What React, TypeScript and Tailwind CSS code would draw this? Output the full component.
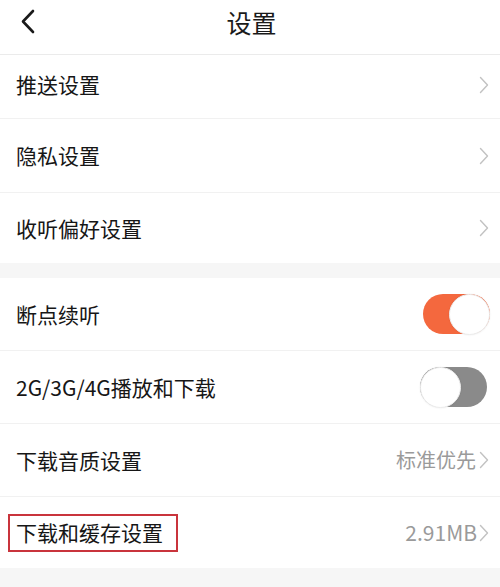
import React from "react";

const font = { fontFamily: '"Noto Sans CJK SC", "Noto Sans", sans-serif' };

function Chevron() {
  return (
    <svg width="10" height="18" viewBox="0 0 10 18" className="shrink-0">
      <path d="M1.5 1.5 L8.5 9 L1.5 16.5" fill="none" stroke="#c2c2c2" strokeWidth="1.4" strokeLinecap="round" strokeLinejoin="round" />
    </svg>
  );
}

function Toggle({ on }: { on: boolean }) {
  return (
    <div
      className={
        "w-[67px] h-[40px] rounded-full flex items-center " +
        (on ? "bg-[#f4683e] justify-end" : "bg-[#8a8a8a] justify-start")
      }
    >
      <div className="w-[41px] h-[41px] rounded-full bg-white border border-[#ececec] shadow-[0_0_2px_rgba(0,0,0,0.08)]" />
    </div>
  );
}

export default function App() {
  return (
    <div className="w-[500px] h-[587px] bg-[#f6f6f6] overflow-hidden" style={font}>
      <div className="h-[55px] bg-white border-b border-[#ebebeb] flex items-center relative">
        <svg width="16" height="26" viewBox="0 0 16 26" className="ml-[20px] mb-[11px]">
          <path d="M13 2 L3 12.5 L13 23" fill="none" stroke="#1a1a1a" strokeWidth="2.6" strokeLinecap="round" strokeLinejoin="round" />
        </svg>
        <div className="absolute left-0 right-0 top-0 h-[45px] flex items-center justify-center text-[25px] text-[#1a1a1a] pl-[3px]">
          设置
        </div>
      </div>

      <div className="bg-white">
        <div className="h-[64px] flex items-center justify-between pl-4 pr-[11px] pb-[4px] border-b border-[#f1f1f1]">
          <div className="text-[21px] text-[#161616] leading-none">推送设置</div>
          <Chevron />
        </div>
        <div className="h-[74px] flex items-center justify-between pl-4 pr-[11px] border-b border-[#f1f1f1]">
          <div className="text-[21px] text-[#161616] leading-none">隐私设置</div>
          <Chevron />
        </div>
        <div className="h-[70px] flex items-center justify-between pl-4 pr-[11px]">
          <div className="text-[21px] text-[#161616] leading-none">收听偏好设置</div>
          <Chevron />
        </div>
      </div>

      <div className="h-[15px]" />

      <div className="bg-white">
        <div className="h-[73px] flex items-center justify-between pl-4 pr-[10px] border-b border-[#f1f1f1]">
          <div className="text-[21px] text-[#161616] leading-none">断点续听</div>
          <Toggle on />
        </div>
        <div className="h-[73px] flex items-center justify-between pl-4 pr-[13px] border-b border-[#f1f1f1]">
          <div className="text-[21px] text-[#161616] leading-none">2G/3G/4G播放和下载</div>
          <Toggle on={false} />
        </div>
        <div className="h-[73px] flex items-center justify-between pl-4 pr-[11px] border-b border-[#f1f1f1]">
          <div className="text-[21px] text-[#161616] leading-none">下载音质设置</div>
          <div className="flex items-center gap-[3px]">
            <span className="text-[20px] text-[#9a9a9a] leading-none">标准优先</span>
            <Chevron />
          </div>
        </div>
        <div className="h-[71px] flex items-center justify-between pl-[8px] pr-[11px]">
          <div className="border-2 border-[#c9343c] h-[38px] w-[170px] flex items-center pl-[6px] text-[21px] text-[#161616] leading-none">
            下载和缓存设置
          </div>
          <div className="flex items-center gap-[2px]">
            <span className="text-[21px] text-[#9a9a9a] leading-none">2.91MB</span>
            <Chevron />
          </div>
        </div>
      </div>
    </div>
  );
}
